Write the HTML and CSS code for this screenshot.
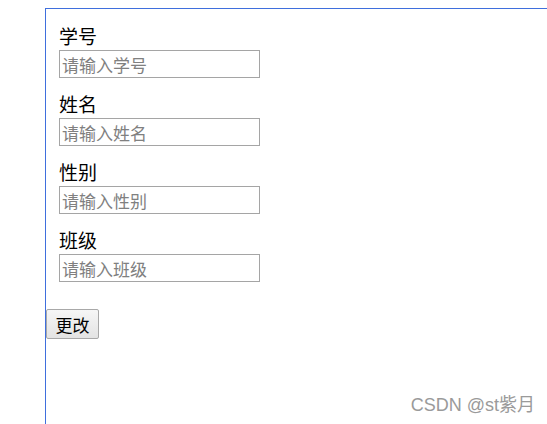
FILE: index.html
```html
<!DOCTYPE html>
<html lang="zh-CN">
<head>
  <meta charset="UTF-8" />
  <meta name="viewport" content="width=device-width, initial-scale=1.0" />
  <title>修改学生信息</title>
  <link rel="stylesheet" href="styles.css">
</head>
<body>
  <div class="frame">
    <form class="edit-form">
      <div class="fields">
        <div class="field">
          <label>学号</label>
          <input type="text" placeholder="请输入学号">
        </div>
        <div class="field">
          <label>姓名</label>
          <input type="text" placeholder="请输入姓名">
        </div>
        <div class="field">
          <label>性别</label>
          <input type="text" placeholder="请输入性别">
        </div>
        <div class="field">
          <label>班级</label>
          <input type="text" placeholder="请输入班级">
        </div>
      </div>
      <button type="button">更改</button>
    </form>
  </div>
  <div class="watermark">CSDN @st紫月</div>
</body>
</html>
```

FILE: styles.css
```css
html, body {
  height: 100%;
}
body {
  margin: 0;
  font-family: "Noto Sans CJK SC", "Liberation Sans", sans-serif;
  background-color: #fff;
  overflow: hidden;
}
.frame {
  box-sizing: border-box;
  margin: 8px 0 0 45px;
  height: calc(100vh - 8px);
  width: calc(100vw - 45px);
  border-top: 1px solid #3f6fdd;
  border-left: 1px solid #3f6fdd;
}
.fields {
  padding: 14px 0 0 13px;
}
.field {
  margin-bottom: 13px;
}
.field label {
  display: block;
  font-size: 19px;
  line-height: 25px;
  margin-bottom: 2px;
  color: #000;
}
.field input {
  display: block;
  box-sizing: border-box;
  width: 201px;
  height: 28px;
  margin: 0;
  padding: 0 2px;
  border: 1px solid #a5a5a5;
  font-family: inherit;
  font-size: 17px;
  color: #000;
}
.field input::placeholder {
  color: #808080;
}
.edit-form button {
  margin-top: 14px;
  width: 53px;
  height: 30px;
  padding: 0;
  border: 1px solid #a8a8a8;
  border-radius: 2px;
  background: linear-gradient(#f6f6f6, #e3e3e3);
  font-family: inherit;
  font-size: 17px;
  color: #000;
}
.watermark {
  position: absolute;
  right: 12px;
  bottom: 8px;
  font-size: 18px;
  color: #9a9a9a;
  font-family: "Liberation Sans", "Noto Sans CJK SC", sans-serif;
}
```
